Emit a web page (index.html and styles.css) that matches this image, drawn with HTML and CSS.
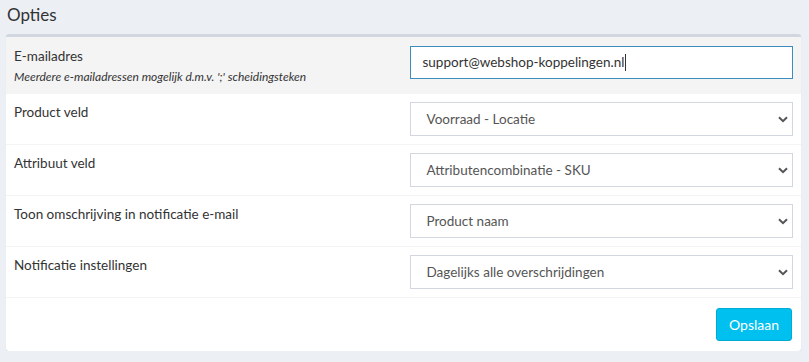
FILE: index.html
```html
<!DOCTYPE html>
<html>
  <head>
    <link rel="stylesheet" href="styles.css">
  </head>
  <body>
    <h3 class="page-title">Opties</h3>

    <div class="box">
      <div class="row row-active">
        <div class="label">
          E-mailadres
          <div class="hint">Meerdere e-mailadressen mogelijk d.m.v. ';' scheidingsteken</div>
        </div>
        <div class="field">
          <div class="input focused">support@webshop-koppelingen.nl<span class="caret"></span></div>
        </div>
      </div>

      <div class="row">
        <div class="label">Product veld</div>
        <div class="field">
          <div class="select">
            Voorraad - Locatie
            <svg class="chevron" width="10" height="7" viewBox="0 0 10 7"><path d="M1 1.2 5 5.2 9 1.2" fill="none" stroke="#555" stroke-width="2"/></svg>
          </div>
        </div>
      </div>

      <div class="row">
        <div class="label">Attribuut veld</div>
        <div class="field">
          <div class="select">
            Attributencombinatie - SKU
            <svg class="chevron" width="10" height="7" viewBox="0 0 10 7"><path d="M1 1.2 5 5.2 9 1.2" fill="none" stroke="#555" stroke-width="2"/></svg>
          </div>
        </div>
      </div>

      <div class="row">
        <div class="label">Toon omschrijving in notificatie e-mail</div>
        <div class="field">
          <div class="select">
            Product naam
            <svg class="chevron" width="10" height="7" viewBox="0 0 10 7"><path d="M1 1.2 5 5.2 9 1.2" fill="none" stroke="#555" stroke-width="2"/></svg>
          </div>
        </div>
      </div>

      <div class="row">
        <div class="label">Notificatie instellingen</div>
        <div class="field">
          <div class="select">
            Dagelijks alle overschrijdingen
            <svg class="chevron" width="10" height="7" viewBox="0 0 10 7"><path d="M1 1.2 5 5.2 9 1.2" fill="none" stroke="#555" stroke-width="2"/></svg>
          </div>
        </div>
      </div>

      <div class="footer">
        <button class="btn-save">Opslaan</button>
      </div>
    </div>
  </body>
</html>
```

FILE: styles.css
```css
body {
  margin: 0;
  padding: 0 8px 0 6px;
  background-color: #ecf0f5;
  font-family: Lato, "Liberation Sans", sans-serif;
  font-size: 13.5px;
  color: #333;
}

.page-title {
  margin: 0;
  padding: 4px 1px 0;
  height: 30px;
  font-size: 17px;
  font-weight: normal;
  line-height: 22px;
  color: #333;
}

.box {
  background-color: white;
  border-top: 3px solid #d2d6de;
  border-radius: 3px;
  box-shadow: 0 1px 1px rgba(0, 0, 0, 0.1);
}

.row {
  display: grid;
  grid-template-columns: 1fr 1fr;
  border-top: 1px solid #f4f4f4;
}

.row-active {
  background-color: #f4f4f4;
}

.label {
  padding: 8px 8px;
  line-height: 20px;
}

.hint {
  margin-top: 2px;
  font-size: 12px;
  font-style: italic;
  line-height: 17px;
}

.field {
  padding: 8px 8px 8px 6px;
}

.input,
.select {
  position: relative;
  box-sizing: border-box;
  height: 34px;
  padding: 0 12px;
  border: 1px solid #d2d6de;
  background-color: white;
  line-height: 32px;
  color: #555;
}

.input.focused {
  height: 33px;
  border-color: #3c8dbc;
  line-height: 31px;
  color: #333;
}

.select {
  padding-left: 16px;
}

.caret {
  display: inline-block;
  width: 1px;
  height: 17px;
  margin-left: 1px;
  vertical-align: -4px;
  background-color: #333;
}

.chevron {
  position: absolute;
  right: 4px;
  top: 13px;
}

.footer {
  display: flex;
  justify-content: flex-end;
  padding: 10px 9px 10px 10px;
  border-top: 1px solid #f4f4f4;
}

.btn-save {
  height: 33px;
  padding: 0 12px;
  border: 1px solid #00acd6;
  border-radius: 3px;
  background-color: #00c0ef;
  color: white;
  font-family: Lato, "Liberation Sans", sans-serif;
  font-size: 14px;
}
```
